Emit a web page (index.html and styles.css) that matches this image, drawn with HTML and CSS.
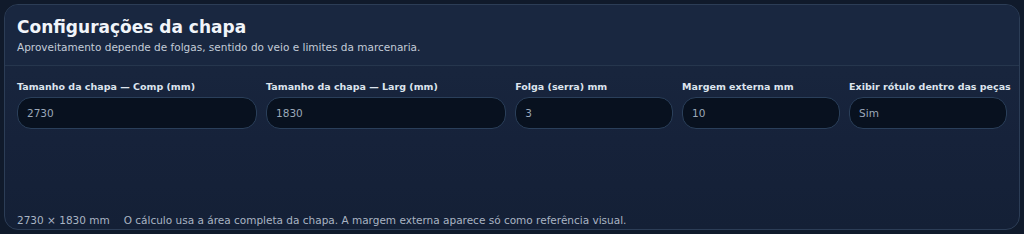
FILE: index.html
```html
<!DOCTYPE html>
<html lang="pt">
<head>
<meta charset="utf-8">
<link rel="stylesheet" href="styles.css">
</head>
<body>
<section class="card">
  <header class="card-head">
    <h1 class="title">Configurações da chapa</h1>
    <p class="subtitle">Aproveitamento depende de folgas, sentido do veio e limites da marcenaria.</p>
  </header>
  <div class="fields">
    <label class="field">
      <span class="label">Tamanho da chapa — Comp (mm)</span>
      <span class="input">2730</span>
    </label>
    <label class="field">
      <span class="label">Tamanho da chapa — Larg (mm)</span>
      <span class="input">1830</span>
    </label>
    <label class="field">
      <span class="label">Folga (serra) mm</span>
      <span class="input">3</span>
    </label>
    <label class="field">
      <span class="label">Margem externa mm</span>
      <span class="input">10</span>
    </label>
    <label class="field">
      <span class="label">Exibir rótulo dentro das peças</span>
      <span class="input">Sim</span>
    </label>
  </div>
  <footer class="card-foot">
    <span class="dims">2730 × 1830 mm</span>
    <span class="note">O cálculo usa a área completa da chapa. A margem externa aparece só como referência visual.</span>
  </footer>
</section>
</body>
</html>
```

FILE: styles.css
```css
* { box-sizing: border-box; }
html, body { margin: 0; height: 100%; }
body {
  background: #101a2b;
  padding: 4px 4px 4px 4px;
  font-family: "DejaVu Sans", Verdana, sans-serif;
  color: #e6ecf4;
}
.card {
  height: 226px;
  border: 1px solid #2c3d56;
  border-radius: 14px;
  background: linear-gradient(180deg, #1a2840 0%, #16223a 60%, #142036 100%);
  display: flex;
  flex-direction: column;
  overflow: hidden;
}
.card-head {
  padding: 12px 12px 11px 12px;
  border-bottom: 1px solid #26364d;
  background: #192740;
}
.title {
  margin: 0;
  font-size: 17px;
  font-weight: bold;
  line-height: 20px;
  color: #f1f5fa;
}
.subtitle {
  margin: 3px 0 0 0;
  font-size: 10.5px;
  line-height: 14px;
  color: #c3ccd8;
}
.fields {
  display: grid;
  grid-template-columns: 1.52fr 1.52fr 1fr 1fr 1fr;
  column-gap: 9px;
  padding: 15px 12px 0 12px;
}
.field { display: flex; flex-direction: column; min-width: 0; }
.label {
  font-size: 9.5px;
  font-weight: bold;
  line-height: 12px;
  color: #dde4ee;
  white-space: nowrap;
  margin-bottom: 4px;
}
.input {
  height: 32px;
  border: 1px solid #2a3f5a;
  border-radius: 14px;
  background: #08111f;
  padding: 0 9px;
  display: flex;
  align-items: center;
  font-size: 10.5px;
  color: #9ba8b9;
}
.card-foot {
  margin-top: auto;
  padding: 0 12px 2px 12px;
  font-size: 10.5px;
  line-height: 14px;
  color: #a9b4c3;
  display: flex;
  gap: 14px;
}
```
